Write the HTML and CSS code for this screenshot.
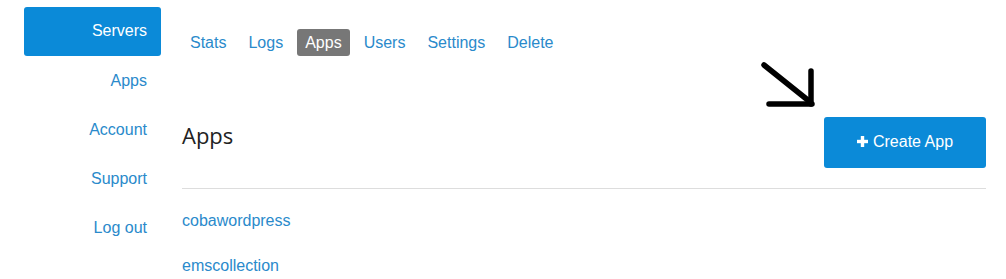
FILE: index.html
```html
<!DOCTYPE html>
<html>
<head>
<meta charset="utf-8">
<link rel="stylesheet" href="styles.css">
</head>
<body>
<div class="page">
  <nav class="sidebar">
    <a class="side-item active" href="#">Servers</a>
    <a class="side-item" href="#">Apps</a>
    <a class="side-item" href="#">Account</a>
    <a class="side-item" href="#">Support</a>
    <a class="side-item" href="#">Log out</a>
  </nav>
  <main class="main">
    <ul class="tabs">
      <li><a class="tab" href="#">Stats</a></li>
      <li><a class="tab" href="#">Logs</a></li>
      <li><a class="tab active" href="#">Apps</a></li>
      <li><a class="tab" href="#">Users</a></li>
      <li><a class="tab" href="#">Settings</a></li>
      <li><a class="tab" href="#">Delete</a></li>
    </ul>
    <div class="header">
      <h2 class="title">Apps</h2>
      <a class="btn" href="#"><svg class="plus" width="11" height="11" viewBox="0 0 11 11"><rect x="3.8" y="0" width="3.4" height="11" fill="#fff"/><rect x="0" y="3.8" width="11" height="3.4" fill="#fff"/></svg>Create App</a>
    </div>
    <hr class="rule">
    <ul class="apps">
      <li><a class="app" href="#">cobawordpress</a></li>
      <li><a class="app" href="#">emscollection</a></li>
    </ul>
  </main>
  <svg class="arrow" width="70" height="60" viewBox="0 0 70 60">
    <path d="M5 7 L50 43" stroke="#000" stroke-width="5.5" stroke-linecap="round" fill="none"/>
    <path d="M52 13 L52 46" stroke="#000" stroke-width="5.5" stroke-linecap="round" fill="none"/>
    <path d="M10 46 L53 46" stroke="#000" stroke-width="5.5" stroke-linecap="round" fill="none"/>
  </svg>
</div>
</body>
</html>
```
FILE: styles.css
```css
html, body {
  margin: 0;
  padding: 0;
  background: #fff;
}
body {
  font-family: "Liberation Sans", Arial, sans-serif;
  font-size: 16px;
  width: 1006px;
  height: 279px;
  overflow: hidden;
}
a { text-decoration: none; }
.page {
  position: relative;
  display: flex;
  gap: 21px;
  padding: 7px 20px 0 24px;
}
.sidebar {
  width: 137px;
  flex: none;
  display: flex;
  flex-direction: column;
}
.side-item {
  display: block;
  height: 49px;
  line-height: 49px;
  text-align: right;
  padding-right: 14px;
  color: #2a8acb;
  border-radius: 3px;
}
.side-item.active {
  background: #0b8ad8;
  color: #fff;
  line-height: 48px;
}
.main {
  flex: 1;
  display: flex;
  flex-direction: column;
  padding-top: 22px;
}
.tabs {
  list-style: none;
  margin: 0;
  padding: 0;
  display: flex;
  gap: 6px;
}
.tab {
  display: block;
  padding: 4px 8px;
  line-height: 19px;
  color: #2a8acb;
  border-radius: 3px;
}
.tab.active {
  background: #777;
  color: #fff;
}
.header {
  margin-top: 61px;
  display: flex;
  justify-content: space-between;
  align-items: center;
}
.title {
  margin: 0 0 16px;
  font-family: "Open Sans", sans-serif;
  font-weight: 400;
  font-size: 22px;
  color: #222;
  line-height: 30px;
}
.btn {
  width: 162px;
  height: 51px;
  display: flex;
  align-items: center;
  justify-content: center;
  gap: 5px;
  background: #0b8ad8;
  color: #fff;
  border-radius: 3px;
  box-sizing: border-box;
  padding-bottom: 2px;
}
.plus { display: block; }
.rule {
  margin: 20px 0 0;
  border: 0;
  border-top: 1px solid #ddd;
}
.apps {
  list-style: none;
  margin: 9px 0 0;
  padding: 0;
}
.app {
  display: block;
  line-height: 45px;
  color: #2a8acb;
}
.arrow {
  position: absolute;
  left: 759px;
  top: 58px;
}
```
